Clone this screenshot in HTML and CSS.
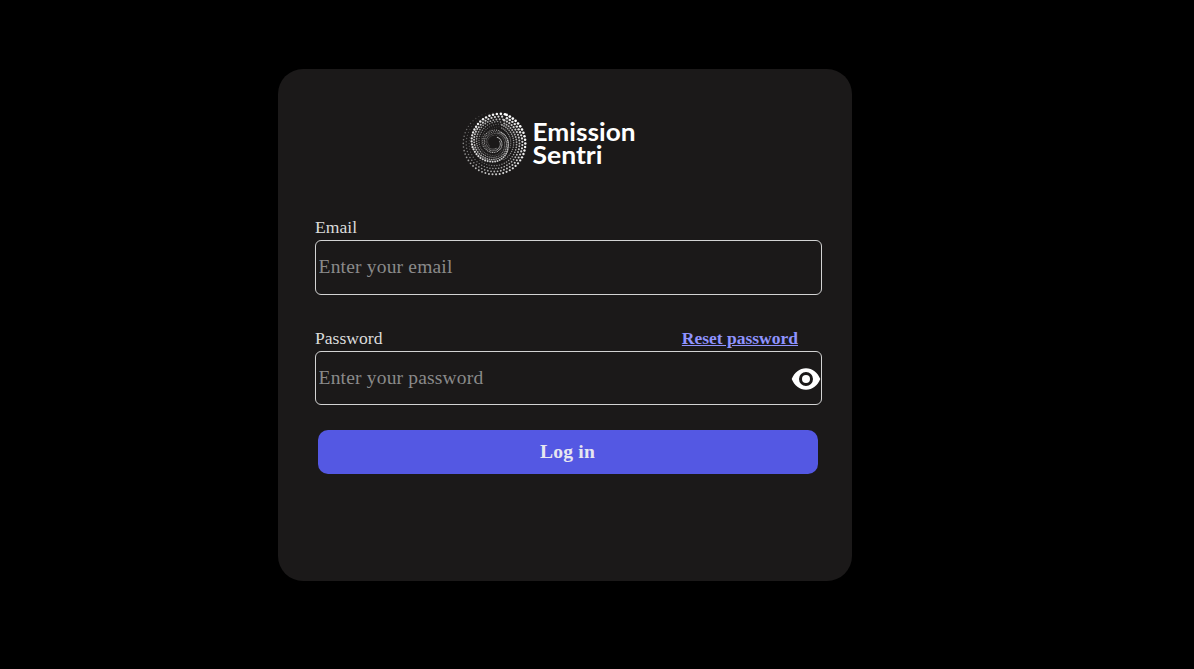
FILE: index.html
```html
<!DOCTYPE html>
<html lang="en">
<head>
<meta charset="utf-8">
<title>Emission Sentri</title>
<link rel="stylesheet" href="styles.css">
</head>
<body>
<main class="card">
  <svg class="logo" width="180" height="70" viewBox="0 0 180 70" role="img" aria-label="Emission Sentri">
    <g id="swirl" fill="#fff"></g>
    <text class="brand"><tspan x="72.5" y="32" textLength="103" lengthAdjust="spacingAndGlyphs">Emission</tspan><tspan x="72.5" y="55" textLength="70" lengthAdjust="spacingAndGlyphs">Sentri</tspan></text>
  </svg>
  <form class="form">
    <div class="field">
      <label class="label" for="email">Email</label>
      <input class="input input-email" id="email" type="email" placeholder="Enter your email">
    </div>
    <div class="field">
      <div class="label-row">
        <label class="label" for="password">Password</label>
        <a class="reset" href="#">Reset password</a>
      </div>
      <div class="password-box">
        <input class="input" id="password" type="password" placeholder="Enter your password">
        <svg class="eye" width="30" height="24" viewBox="0 0 30 24">
          <path fill="#fff" fill-rule="evenodd" d="M15 1.2C8.5 1.2 3.4 5.4 .7 12c2.700 6.600 7.800 10.800 14.300 10.800S26.600 18.600 29.300 12C26.600 5.400 21.500 1.200 15 1.200ZM15 5a7 7 0 1 1 0 14 7 7 0 0 1 0-14Z"/>
          <circle cx="15" cy="12" r="4" fill="#fff"/>
        </svg>
      </div>
    </div>
    <button class="login" type="button">Log in</button>
  </form>
</main>
<script src="logo.js"></script>
</body>
</html>
```
FILE: styles.css
```css
body {
  margin: 0;
  background: #000;
  font-family: "Liberation Serif", "Times New Roman", serif;
}
.card {
  box-sizing: border-box;
  width: 574px;
  height: 512px;
  margin: 69px 0 0 278px;
  padding: 40px 30px 0 37px;
  border-radius: 25px;
  background: #1b1919;
}
.logo {
  display: block;
  margin-left: 145px;
}
.brand {
  font: 700 24.5px Lato, sans-serif;
  fill: #fff;
}
.form {
  display: flex;
  flex-direction: column;
  padding-top: 38px;
}
.field {
  width: 507px;
  height: 111px;
}
.label-row {
  display: flex;
  justify-content: space-between;
  width: 483px;
}
.label,
.reset {
  display: block;
  height: 23px;
  font-size: 17.6px;
  line-height: 21px;
}
.label {
  color: #dcdcdc;
}
.reset {
  color: #8f93ff;
  font-size: 17.5px;
  font-weight: 700;
}
.input {
  display: block;
  box-sizing: border-box;
  width: 507px;
  height: 54px;
  padding: 1px 2.6px;
  border: 1px solid #d3d3d3;
  border-radius: 6px;
  background: transparent;
  color: #dcdcdc;
  font: 19.5px "Liberation Serif", "Times New Roman", serif;
  letter-spacing: 0.18px;
}
.input-email {
  height: 55px;
  padding-bottom: 3px;
}
.input::placeholder {
  color: #8a8a8a;
}
.password-box {
  position: relative;
}
.eye {
  position: absolute;
  right: 1.5px;
  top: 16px;
}
.login {
  width: 500px;
  height: 44px;
  margin: -9px 0 0 3px;
  padding: 0 1px 1px 0;
  border: 0;
  border-radius: 10px;
  background: #5458e3;
  color: #e6e6f0;
  font: 700 19.6px "Liberation Serif", "Times New Roman", serif;
  letter-spacing: 0.18px;
}
```
FILE: logo.js
```js
// Dotted spiral: rings of dots whose size depends on the distance to a spiral edge.
const edgeStops = [[0, 32], [35, 28.5], [70, 25.5], [110, 23.5], [180, 20.5], [220, 19], [270, 15.5], [360, 13], [450, 12], [540, 10], [630, 8], [720, 6]];
function edge(a) {
  for (let i = 1; i < edgeStops.length; i++) {
    const [a0, r0] = edgeStops[i - 1];
    const [a1, r1] = edgeStops[i];
    if (a <= a1) return r0 + (r1 - r0) * (a - a0) / (a1 - a0);
  }
  return 6;
}
const swirl = document.getElementById("swirl");
const ns = "http://www.w3.org/2000/svg";
function addDot(r, deg, size, alpha) {
  // Inner rings sit slightly above the centre of the outer ring.
  const lift = r < 22 ? 1.2 : 0.6;
  const dot = document.createElementNS(ns, "circle");
  dot.setAttribute("cx", (34.3 + r * Math.cos(deg * Math.PI / 180)).toFixed(2));
  dot.setAttribute("cy", (35 - lift + r * Math.sin(deg * Math.PI / 180)).toFixed(2));
  dot.setAttribute("r", size.toFixed(2));
  dot.setAttribute("opacity", alpha.toFixed(2));
  swirl.appendChild(dot);
}
// Outer band, open towards the left.
for (let k = 0; k < 6; k++) {
  const r = 31 - k * 2.9;
  for (let i = 0; i < 54; i++) {
    const deg = (i + (k % 2) / 2) * 360 / 54;
    const a = (290 - deg + 360) % 360;
    if (r > edge(a) + 0.8) {
      const c = (360 - a) / 360;
      addDot(r, deg, Math.max(0.4, 1.4 - c * 0.85 - k * 0.11), Math.max(0.06, 1 - c * c * 1.1 - k * 0.11));
    }
  }
}
// Middle band follows the spiral edge and thins out towards the centre.
for (let k = 0; k < 6; k++) {
  for (let i = 0; i < 48; i++) {
    const a = (i + (k % 2) / 2) * 360 / 48;
    const r = edge(a) - 1 - k * (2.8 - a / 300);
    if (r > edge(a + 360) + 1) {
      addDot(r, 290 - a, Math.max(0.4, 1.3 - a / 650 - k * 0.15), Math.max(0.12, 1 - a / 900 - k * 0.16));
    }
  }
}
// Fine core spiral.
for (let k = 0; k < 4; k++) {
  for (let i = 0; i < 36; i++) {
    const a = (i + (k % 2) / 2) * 360 / 36;
    const r = edge(a + 360) - k * 1.7;
    if (r > 5.5) {
      addDot(r, 290 - a, 0.6 - k * 0.04, 0.7 - k * 0.12);
    }
  }
}
```
